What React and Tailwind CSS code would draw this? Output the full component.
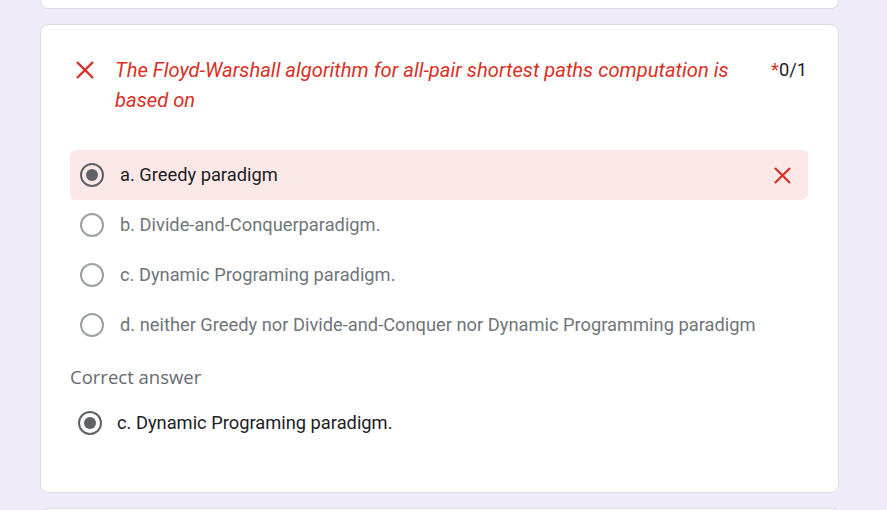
import React from "react";

function XIcon({ className }) {
  return (
    <svg viewBox="0 0 18 18" className={className} fill="none" stroke="#d93025" strokeWidth="2.4" strokeLinecap="butt">
      <line x1="1" y1="1" x2="17" y2="17" />
      <line x1="17" y1="1" x2="1" y2="17" />
    </svg>
  );
}

function Radio({ checked }) {
  return (
    <div
      className={
        "w-[24px] h-[24px] shrink-0 rounded-full border-[2.5px] flex items-center justify-center " +
        (checked ? "border-[#5f6368]" : "border-[#9aa0a6]")
      }
    >
      {checked && <div className="w-[12px] h-[12px] rounded-full bg-[#5f6368]" />}
    </div>
  );
}

function Option({ label, checked, wrong }) {
  return (
    <div
      className={
        "h-[50px] flex items-center pl-[10px] pr-[17px] rounded-[6px] " +
        (wrong ? "bg-[#fce8e6]" : "")
      }
    >
      <Radio checked={checked} />
      <span
        className={
          "ml-[16px] text-[18.3px] flex-1 " + (checked ? "text-[#202124]" : "text-[#70757a]")
        }
      >
        {label}
      </span>
      {wrong && <XIcon className="w-[17px] h-[17px]" />}
    </div>
  );
}

export default function App() {
  return (
    <div
      className="bg-[#f0ebf8] flex flex-col gap-[15px] overflow-hidden h-[510px]"
      style={{ fontFamily: "Roboto, 'Liberation Sans', sans-serif" }}
    >
      <div className="ml-[40px] w-[799px] h-[9px] shrink-0 bg-white border border-t-0 border-[#dadce0] rounded-b-[8px]" />
      <div className="ml-[40px] w-[799px] h-[469px] shrink-0 bg-white border border-[#dadce0] rounded-[8px] pl-[29px] pr-[31px] pt-[30px]">
        <div className="flex items-start">
          <div className="w-[45px] shrink-0 h-[30px] flex items-center pl-[6px]">
            <XIcon className="w-[18px] h-[18px]" />
          </div>
          <div className="flex-1 pr-[30px] text-[20.2px] leading-[30px] italic text-[#d93025]">
            The Floyd-Warshall algorithm for all-pair shortest paths computation is based on
          </div>
          <div className="text-[18.3px] leading-[30px] text-[#202124] whitespace-nowrap">
            <span className="text-[#d93025]">*</span>0/1
          </div>
        </div>
        <div className="mt-[35px] mr-[-1px]">
          <Option label="a. Greedy paradigm" checked wrong />
          <Option label="b. Divide-and-Conquerparadigm." />
          <Option label="c. Dynamic Programing paradigm." />
          <Option label="d. neither Greedy nor Divide-and-Conquer nor Dynamic Programming paradigm" />
        </div>
        <div
          className="mt-[15px] text-[18.5px] leading-[24px] font-medium text-[#666a6f]"
          style={{ fontFamily: "'Open Sans', Lato, sans-serif" }}
        >
          Correct answer
        </div>
        <div className="mt-[9px] h-[50px] flex items-center pl-[8px]">
          <Radio checked />
          <span className="ml-[15px] text-[18.3px] text-[#202124]">c. Dynamic Programing paradigm.</span>
        </div>
      </div>
      <div className="ml-[40px] w-[799px] h-[40px] shrink-0 bg-white border border-[#dadce0] rounded-t-[8px]" />
    </div>
  );
}
